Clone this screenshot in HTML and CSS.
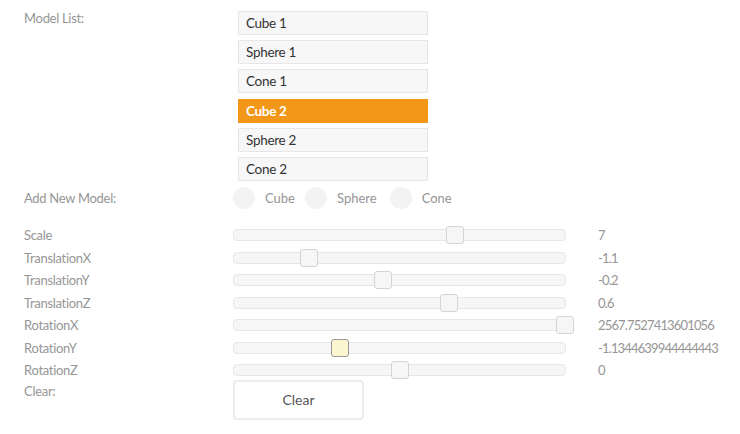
FILE: index.html
```html
<!DOCTYPE html>
<html>
<head>
<meta charset="utf-8">
<link rel="stylesheet" href="styles.css">
</head>
<body>
<div class="app">
  <div class="model-row">
    <div class="label model-label">Model List:</div>
    <div class="model-list">
      <div class="item">Cube 1</div>
      <div class="item">Sphere 1</div>
      <div class="item">Cone 1</div>
      <div class="item selected">Cube 2</div>
      <div class="item">Sphere 2</div>
      <div class="item">Cone 2</div>
    </div>
  </div>

  <div class="add-row">
    <div class="label">Add New Model:</div>
    <div class="radios">
      <div class="radio"><span class="circle"></span><span class="rtext">Cube</span></div>
      <div class="radio"><span class="circle"></span><span class="rtext">Sphere</span></div>
      <div class="radio"><span class="circle"></span><span class="rtext">Cone</span></div>
    </div>
  </div>

  <div class="sliders">
    <div class="srow">
      <div class="label">Scale</div>
      <div class="track"><span class="handle" style="left:66.9%"></span></div>
      <div class="value">7</div>
    </div>
    <div class="srow">
      <div class="label">TranslationX</div>
      <div class="track"><span class="handle" style="left:22.6%"></span></div>
      <div class="value">-1.1</div>
    </div>
    <div class="srow">
      <div class="label">TranslationY</div>
      <div class="track"><span class="handle" style="left:45%"></span></div>
      <div class="value">-0.2</div>
    </div>
    <div class="srow">
      <div class="label">TranslationZ</div>
      <div class="track"><span class="handle" style="left:65%"></span></div>
      <div class="value">0.6</div>
    </div>
    <div class="srow">
      <div class="label">RotationX</div>
      <div class="track"><span class="handle" style="left:100%"></span></div>
      <div class="value">2567.7527413601056</div>
    </div>
    <div class="srow">
      <div class="label">RotationY</div>
      <div class="track"><span class="handle active" style="left:31.9%"></span></div>
      <div class="value">-1.1344639944444443</div>
    </div>
    <div class="srow">
      <div class="label">RotationZ</div>
      <div class="track"><span class="handle" style="left:50.2%"></span></div>
      <div class="value">0</div>
    </div>
  </div>

  <div class="clear-row">
    <div class="label clear-label">Clear:</div>
    <button class="clear-btn">Clear</button>
  </div>
</div>
</body>
</html>
```

FILE: styles.css
```css
* { box-sizing: border-box; }
html, body { margin: 0; padding: 0; background: #fff; }
body {
  font-family: Lato, "Liberation Sans", sans-serif;
  font-size: 13px;
  color: #999;
}
.app {
  padding: 11px 0 0 24px;
}
.label {
  color: #969696;
  font-size: 13px;
  line-height: 16px;
  letter-spacing: -0.3px;
}
.model-row {
  display: grid;
  grid-template-columns: 214px 190px;
}
.model-label {
  margin-top: -1px;
}
.model-list {
  display: flex;
  flex-direction: column;
  gap: 5.2px;
}
.item {
  height: 24px;
  line-height: 22px;
  border: 1px solid #e6e6e6;
  background: #f7f7f7;
  color: #333;
  font-size: 13.5px;
  letter-spacing: -0.3px;
  padding-left: 7px;
}
.item.selected {
  background: #f29717;
  border-color: #f29717;
  color: #fff;
  font-weight: bold;
}

.add-row {
  display: grid;
  grid-template-columns: 209px auto;
  align-items: center;
  margin-top: 6px;
  height: 21px;
}
.radios {
  display: flex;
  align-items: center;
}
.radio {
  display: flex;
  align-items: center;
}
.circle {
  width: 22px;
  height: 22px;
  border-radius: 50%;
  background: #f3f3f3;
  display: inline-block;
}
.rtext {
  margin-left: 10px;
  color: #969696;
}
.radio:nth-child(1) .rtext { margin-right: 10px; }
.radio:nth-child(2) .rtext { margin-right: 12px; }
.radio:nth-child(3) .circle { margin-left: 1px; }

.sliders {
  margin-top: 18.5px;
  display: flex;
  flex-direction: column;
  gap: 4.5px;
}
.srow {
  display: grid;
  grid-template-columns: 209px 333px auto;
  align-items: center;
  height: 18px;
}
.track {
  position: relative;
  height: 12px;
  border: 1px solid #e6e6e6;
  background: #f6f6f6;
  border-radius: 4px;
}
.handle {
  position: absolute;
  top: -4px;
  width: 18px;
  height: 18px;
  margin-left: -9px;
  border: 1px solid #d4d4d4;
  background: #f6f6f6;
  border-radius: 3px;
}
.handle.active {
  background: #fcf6d0;
  border-color: #9a9a9a;
}
.value {
  color: #969696;
  margin-left: 32px;
  letter-spacing: -0.85px;
  white-space: nowrap;
}

.clear-row {
  display: grid;
  grid-template-columns: 209px auto;
  margin-top: 1px;
}
.clear-label {
  margin-top: 3px;
}
.clear-btn {
  width: 131px;
  height: 40px;
  background: #fff;
  border: 2px solid #ececec;
  border-radius: 4px;
  font-family: Lato, "Liberation Sans", sans-serif;
  font-size: 14px;
  color: #555;
  padding: 0 0 2px;
}
```
